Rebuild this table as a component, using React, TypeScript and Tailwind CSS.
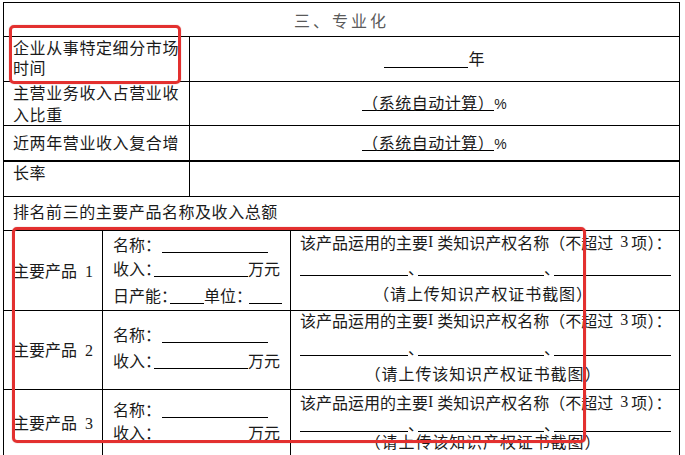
import React from "react";

const F = "font-['Noto_Sans_CJK_SC','Noto_Sans_CJK_JP',sans-serif]";
const SERIF = "font-['Liberation_Serif',serif]";

function Pct() {
  return <span className="font-['Liberation_Sans',sans-serif] text-[14px] leading-[16px]">%</span>;
}

function Calc() {
  return (
    <div className="flex justify-center items-baseline">
      <span className="w-[132px] h-[17px] border-b border-black text-center leading-[16px] tracking-[0.5px] whitespace-nowrap">（系统自动计算）</span>
      <Pct />
    </div>
  );
}

function IPLine() {
  return (
    <div className="flex items-start h-[16px] leading-[16px] whitespace-nowrap">
      <span>该产品运用的主要</span>
      <span className={SERIF}>I</span>
      <span className="w-[4px] shrink-0" />
      <span>类知识产权名称（不超过</span>
      <span className={`${SERIF} ml-[7px] mr-[3px]`}>3</span>
      <span>
        项<span className="tracking-[-6px]">）</span>
        <span className="ml-[6px]">：</span>
      </span>
    </div>
  );
}

function Blanks({ mt }: { mt: string }) {
  return (
    <div className={`flex items-start h-[17px] ${mt}`}>
      <span className="w-[108px] h-[17px] border-b border-black shrink-0" />
      <span className="w-[10px] shrink-0 leading-[16px] whitespace-nowrap">、</span>
      <span className="w-[126px] h-[17px] border-b border-black shrink-0" />
      <span className="w-[10px] shrink-0 leading-[16px] whitespace-nowrap">、</span>
      <span className="w-[117px] h-[17px] border-b border-black shrink-0" />
    </div>
  );
}

function NameLine() {
  return (
    <div className="flex items-start h-[17px] whitespace-nowrap">
      <span className="w-[49px] shrink-0 leading-[16px]">名称：</span>
      <span className="w-[106px] h-[17px] border-b border-black shrink-0" />
    </div>
  );
}

function IncomeLine({ mt }: { mt: string }) {
  return (
    <div className={`flex items-start h-[17px] whitespace-nowrap ${mt}`}>
      <span className="w-[41px] shrink-0 leading-[16px]">收入：</span>
      <span className="w-[94px] h-[17px] border-b border-black shrink-0" />
      <span className="leading-[16px]">万元</span>
    </div>
  );
}

function Label({ n }: { n: string }) {
  return (
    <div className="w-[99px] shrink-0 border-r border-black flex items-center pl-[9px]">
      <span className="leading-[16px] whitespace-nowrap">
        主要产品<span className={`${SERIF} ml-[8px]`}>{n}</span>
      </span>
    </div>
  );
}

export default function App() {
  return (
    <div className={`relative w-[685px] h-[455px] overflow-hidden bg-white text-[16px] text-[#1a1a1a] ${F}`}>
      <div className="ml-[3px] mt-[2px] w-[677px] border-x border-black">
        {/* header */}
        <div className="h-[34px] border-t border-black flex items-center justify-center text-[#5a5a5a] tracking-[3px] leading-[16px]">
          三、专业化
        </div>

        {/* row 1 */}
        <div className="h-[45px] border-t border-black flex">
          <div className="w-[186px] shrink-0 border-r border-black pl-[9px] leading-[20px] tracking-[0.6px] whitespace-nowrap">
            企业从事特定细分市场
            <br />
            时间
          </div>
          <div className="flex-1 flex justify-center items-start pt-[13px]">
            <span className="w-[84px] h-[18px] border-b border-black" />
            <span className="leading-[16px]">年</span>
          </div>
        </div>

        {/* row 2 */}
        <div className="h-[44px] border-t border-black flex">
          <div className="w-[186px] shrink-0 border-r border-black pl-[9px] tracking-[0.6px] whitespace-nowrap">
            <div className="-mt-[1px] leading-[22px]">
              主营业务收入占营业收
              <br />
              入比重
            </div>
          </div>
          <div className="flex-1 pt-[12px]">
            <Calc />
          </div>
        </div>

        {/* row 3 */}
        <div className="h-[35px] border-t border-black flex">
          <div className="w-[186px] shrink-0 border-r border-black pl-[9px] pt-[6px] leading-[20px] tracking-[0.6px] whitespace-nowrap">
            近两年营业收入复合增
          </div>
          <div className="flex-1 pt-[8px]">
            <Calc />
          </div>
        </div>

        {/* row 4 */}
        <div className="h-[36px] border-t-2 border-black flex">
          <div className="w-[186px] shrink-0 border-r border-black pl-[9px] leading-[20px] tracking-[0.6px]">长率</div>
          <div className="flex-1" />
        </div>

        {/* row 5 */}
        <div className="h-[34px] border-t border-black pl-[9px] pt-[4px] leading-[20px] tracking-[0.55px] whitespace-nowrap">
          排名前三的主要产品名称及收入总额
        </div>

        {/* product 1 */}
        <div className="h-[80px] border-t border-black flex">
          <Label n="1" />
          <div className="w-[188px] shrink-0 border-r border-black pl-[10px] pt-[5px]">
            <NameLine />
            <IncomeLine mt="mt-[7px]" />
            <div className="flex items-start h-[17px] whitespace-nowrap mt-[10px]">
              <span className="w-[57px] shrink-0 leading-[16px]">日产能：</span>
              <span className="w-[34px] h-[17px] border-b border-black shrink-0" />
              <span className="w-[45px] shrink-0 leading-[16px]">单位：</span>
              <span className="w-[33px] h-[17px] border-b border-black shrink-0" />
            </div>
          </div>
          <div className="flex-1 pl-[9px] pt-[3px]">
            <IPLine />
            <Blanks mt="mt-[9px]" />
            <div className="mt-[9px] pr-[13px] text-center leading-[16px] tracking-[0.9px] whitespace-nowrap">
              （请上传知识产权证书截图）
            </div>
          </div>
        </div>

        {/* product 2 */}
        <div className="h-[79px] border-t border-black flex">
          <Label n="2" />
          <div className="w-[188px] shrink-0 border-r border-black pl-[10px] pt-[15px]">
            <NameLine />
            <IncomeLine mt="mt-[9px]" />
          </div>
          <div className="flex-1 pl-[9px] pt-[1px]">
            <IPLine />
            <Blanks mt="mt-[11px]" />
            <div className="mt-[9px] pr-[13px] text-center leading-[16px] tracking-[0.9px] whitespace-nowrap">
              （请上传该知识产权证书截图）
            </div>
          </div>
        </div>

        {/* product 3 */}
        <div className="h-[66px] border-t border-black flex">
          <Label n="3" />
          <div className="w-[188px] shrink-0 border-r border-black pl-[10px] pt-[11px]">
            <NameLine />
            <IncomeLine mt="mt-[6px]" />
          </div>
          <div className="flex-1 pl-[9px] pt-[4px]">
            <IPLine />
            <Blanks mt="mt-[5px]" />
            <div className="mt-[1px] pr-[13px] text-center leading-[16px] tracking-[0.9px] whitespace-nowrap">
              （请上传该知识产权证书截图）
            </div>
          </div>
        </div>
      </div>

      {/* red highlight boxes */}
      <div className="absolute left-[9px] top-[25px] w-[172px] h-[59px] border-[3px] border-[#e3302f] rounded-[5px] shadow-[0_0_1px_rgba(150,0,0,0.6)]" />
      <div className="absolute left-[12px] top-[227px] w-[574px] h-[216px] border-[3px] border-[#e3302f] rounded-[5px] shadow-[0_0_1px_rgba(150,0,0,0.6)]" />
    </div>
  );
}
